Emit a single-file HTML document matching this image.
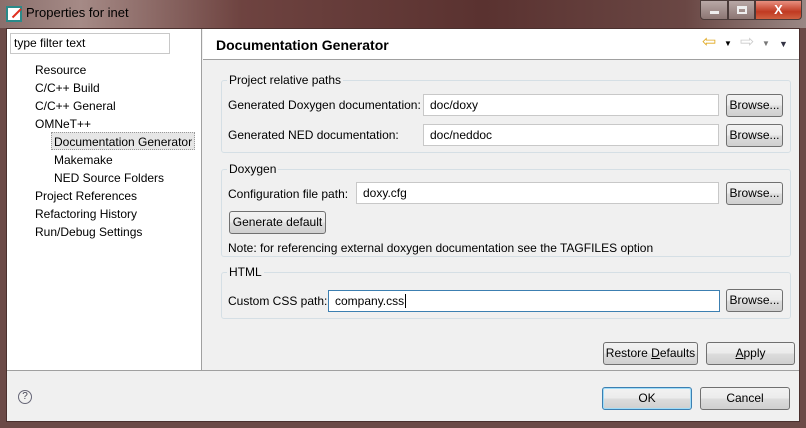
<!DOCTYPE html>
<html><head><style>
*{margin:0;padding:0;box-sizing:border-box}
body{width:806px;height:428px;overflow:hidden;background:#6b4a47;font-family:"Liberation Sans",sans-serif;font-size:12px;color:#000;position:relative}
.a{position:absolute}
.title{left:0;top:0;width:806px;height:28px;background:linear-gradient(90deg,#8a6f6c 0%,#a58a86 10%,#6e4340 30%,#5a3230 60%,#6a4744 85%,#9a8885 100%)}
.client{left:6px;top:28px;width:794px;height:394px;background:#f0f0f0;border:1px solid #4a302e}
.inp{background:#fff;border:1px solid #c8c8c8;height:22px;padding:3px 6px;font-size:12px}
.btn{border:1px solid #707070;border-radius:3px;background:linear-gradient(#f2f2f2,#ebebeb 50%,#dddddd 51%,#cfcfcf);height:23px;text-align:center;line-height:21px;font-size:12px}
.grp{border:1px solid #d5dfe5;border-radius:3px}
.gl{background:#f0f0f0;padding:0 2px}
.t{white-space:nowrap}
</style></head><body>
<div class="a title"></div>
<div class="a" style="left:6px;top:6px;width:16px;height:16px;background:#fff;border:2px solid #2a8a8a"></div>
<div class="a" style="left:9px;top:8px;width:12px;height:2px;background:#e03020;transform:rotate(-45deg);transform-origin:right;"></div>
<div class="a t" style="left:26px;top:5px;font-size:13px;color:#000">Properties for inet</div>
<div class="a" style="left:700px;top:0;width:28px;height:20px;border:1px solid #4a3a38;border-radius:0 0 0 4px;background:linear-gradient(#b8a8a6,#8c7673)"><div class="a" style="left:9px;top:10px;width:9px;height:3px;background:#eee"></div></div>
<div class="a" style="left:728px;top:0;width:27px;height:20px;border:1px solid #4a3a38;background:linear-gradient(#b8a8a6,#8c7673)"><div class="a" style="left:8px;top:5px;width:10px;height:8px;border:2px solid #eee;border-top-width:3px"></div></div>
<div class="a" style="left:755px;top:0;width:47px;height:20px;border:1px solid #4a3a38;border-radius:0 0 4px 0;background:linear-gradient(#e89080,#c03a22 60%,#d06040);color:#fff;font-weight:bold;text-align:center;font-size:13px;line-height:18px">X</div>
<div class="a client"></div>
<div class="a" style="left:7px;top:29px;width:195px;height:342px;background:#fff;border-right:1px solid #a0a0a0"></div>
<div class="a inp" style="left:10px;top:33px;width:160px;height:21px;padding:2px 3px">type filter text</div>
<div class="a t" style="left:35px;top:61px;line-height:18px">Resource<br>C/C++ Build<br>C/C++ General<br>OMNeT++</div>
<div class="a" style="left:51px;top:132px;width:144px;height:18px;background:#e6e6e6;border:1px dotted #999"></div>
<div class="a t" style="left:54px;top:133px;line-height:18px">Documentation Generator<br>Makemake<br>NED Source Folders</div>
<div class="a t" style="left:35px;top:187px;line-height:18px">Project References<br>Refactoring History<br>Run/Debug Settings</div>
<div class="a" style="left:203px;top:29px;width:596px;height:31px;background:#fff;border-bottom:1px solid #a0a0a0"></div>
<div class="a t" style="left:216px;top:37px;font-size:14px;font-weight:bold">Documentation Generator</div>
<div class="a t" style="left:702px;top:32px;font-size:17px;color:#e0a820">⇦</div>
<div class="a t" style="left:724px;top:39px;font-size:8px">▼</div>
<div class="a t" style="left:740px;top:32px;font-size:17px;color:#ccc">⇨</div>
<div class="a t" style="left:762px;top:39px;font-size:8px;color:#777">▼</div>
<div class="a t" style="left:779px;top:39px;font-size:9px;color:#334">▼</div>
<div class="a" style="left:7px;top:370px;width:792px;height:1px;background:#a0a0a0"></div>

<div class="a grp" style="left:221px;top:80px;width:570px;height:73px"></div>
<div class="a gl t" style="left:227px;top:73px">Project relative paths</div>
<div class="a t" style="left:228px;top:98px">Generated Doxygen documentation:</div>
<div class="a inp" style="left:423px;top:94px;width:296px">doc/doxy</div>
<div class="a btn" style="left:726px;top:94px;width:57px">Browse...</div>
<div class="a t" style="left:228px;top:128px">Generated NED documentation:</div>
<div class="a inp" style="left:423px;top:124px;width:296px">doc/neddoc</div>
<div class="a btn" style="left:726px;top:124px;width:57px">Browse...</div>

<div class="a grp" style="left:221px;top:169px;width:570px;height:88px"></div>
<div class="a gl t" style="left:227px;top:162px">Doxygen</div>
<div class="a t" style="left:228px;top:187px">Configuration file path:</div>
<div class="a inp" style="left:356px;top:182px;width:363px">doxy.cfg</div>
<div class="a btn" style="left:726px;top:182px;width:57px">Browse...</div>
<div class="a btn" style="left:229px;top:211px;width:97px">Generate default</div>
<div class="a t" style="left:228px;top:241px">Note: for referencing external doxygen documentation see the TAGFILES option</div>

<div class="a grp" style="left:221px;top:272px;width:570px;height:47px"></div>
<div class="a gl t" style="left:227px;top:265px">HTML</div>
<div class="a t" style="left:228px;top:294px">Custom CSS path:</div>
<div class="a inp" style="left:328px;top:290px;width:392px;border-color:#3c7fb1">company.css<span style="border-left:1px solid #000;margin-left:1px"></span></div>
<div class="a btn" style="left:726px;top:289px;width:57px">Browse...</div>

<div class="a btn" style="left:603px;top:342px;width:95px">Restore <u>D</u>efaults</div>
<div class="a btn" style="left:706px;top:342px;width:89px"><u>A</u>pply</div>
<div class="a" style="left:18px;top:390px;width:14px;height:14px;border:1px solid #667;border-radius:50%;font-size:10px;text-align:center;line-height:12px;color:#445">?</div>
<div class="a btn" style="left:602px;top:387px;width:90px;border-color:#3c7fb1;box-shadow:inset 0 0 0 1px #9fdcf8">OK</div>
<div class="a btn" style="left:700px;top:387px;width:90px">Cancel</div>
</body></html>
